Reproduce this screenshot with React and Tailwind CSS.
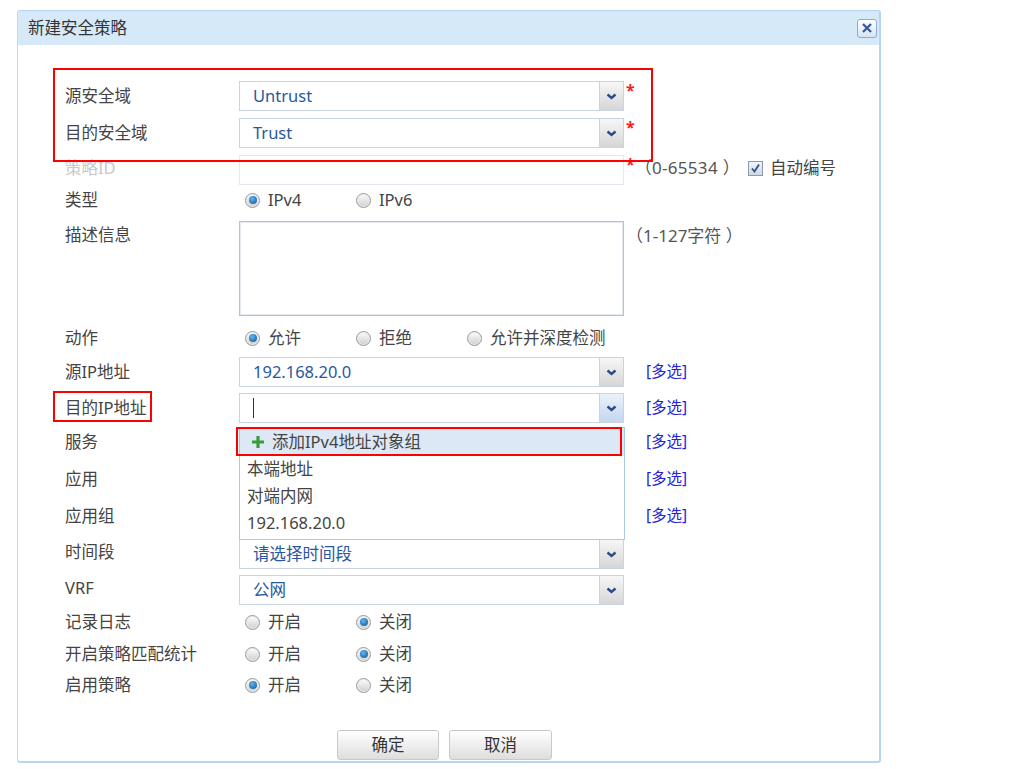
import React from 'react';

const FONT = { fontFamily: '"Noto Sans", "Noto Sans CJK SC", sans-serif' };

function Chevron() {
  return (
    <svg width="11" height="7" viewBox="0 0 11 7">
      <path d="M1.5 1.5 L5.5 5 L9.5 1.5" fill="none" stroke="#2c4a85" strokeWidth="2.4" />
    </svg>
  );
}

function Select({ value, active, children }) {
  return (
    <div className="relative flex h-[30px] w-[385px] border border-[#c9d3e1] bg-white">
      <div className="flex flex-1 items-center pl-[13px] text-[16.5px] text-[#2a58a0]">{value}</div>
      <div
        className={`flex w-[24px] items-center justify-center border-l border-[#c9d3e1] bg-gradient-to-b ${
          active ? 'from-[#eaf2fb] to-[#c3d7ee]' : 'from-[#f7f7f7] to-[#d6d6d6]'
        }`}
      >
        <Chevron />
      </div>
      {children}
    </div>
  );
}

function Radio({ checked, label, width }) {
  return (
    <div className="flex items-center gap-[8px]" style={{ width }}>
      <span className="flex h-[15px] w-[15px] items-center justify-center rounded-full border border-[#9a9a9a] bg-gradient-to-b from-[#fdfdfd] to-[#cfcfcf] shadow-[inset_0_0_0_1px_#ececec]">
        {checked && <span className="h-[8px] w-[8px] rounded-full bg-[radial-gradient(circle_at_40%_35%,#5fb8f0,#0b4f93)]" />}
      </span>
      <span className="text-[16.5px] text-[#444]">{label}</span>
    </div>
  );
}

function Row({ label, labelClass = 'text-[#444]', className = '', children, labelExtra }) {
  return (
    <div className={`flex items-center ${className}`}>
      <div className={`relative w-[174px] text-[16.5px] ${labelClass}`}>
        {label}
        {labelExtra}
      </div>
      {children}
    </div>
  );
}

function Multi() {
  return <span className="ml-[22px] text-[15.5px] text-[#2323d8]">[多选]</span>;
}

function Star() {
  return <span className="ml-[2px] self-start text-[16px] leading-[18px] font-bold text-[#ff1a1a]">*</span>;
}

export default function App() {
  return (
    <div className="min-h-[769px] w-[1015px] bg-white pl-[17px] pt-[10px]" style={FONT}>
      <div className="h-[753px] w-[864px] rounded-[3px] border border-r-2 border-b-2 border-[#b8d5ef] border-l-[#d4d4d4] bg-white">
        {/* header */}
        <div className="flex h-[34px] items-center justify-between bg-[#d6e9f8] pl-[10px] pr-[2px]">
          <span className="text-[16.5px] text-[#333]">新建安全策略</span>
          <div className="flex h-[19px] w-[20px] items-center justify-center rounded-[3px] border border-[#8eaad6] bg-gradient-to-b from-[#ffffff] to-[#d5e4f4]">
            <svg width="12" height="12" viewBox="0 0 12 12">
              <path d="M2 2 L10 10 M10 2 L2 10" stroke="#3d5a99" strokeWidth="2.4" />
            </svg>
          </div>
        </div>

        {/* body */}
        <div className="relative pl-[47px] pt-[36px]">
          <div className="pointer-events-none absolute left-[35px] top-[23px] z-20 h-[94px] w-[600px] border-2 border-[#ff0000]" />

          <Row label="源安全域">
            <Select value="Untrust" />
            <Star />
          </Row>
          <Row label="目的安全域" className="mt-[7px]">
            <Select value="Trust" />
            <Star />
          </Row>
          <Row label="策略ID" labelClass="text-[#c8c8c8] -mt-[4px]" className="mt-[7px]">
            <div className="h-[30px] w-[385px] border border-[#e3e9f1] bg-white" />
            <span className="ml-[2px] self-start text-[16px] leading-[18px] font-bold text-[#ff1a1a]">*</span>
            <span className="-mt-[4px] text-[17px] tracking-[0.3px] text-[#555]">（0-65534 ）</span>
            <span className="-mt-[4px] ml-[8px] flex h-[15px] w-[15px] items-center justify-center border border-[#8a9ab0] bg-gradient-to-b from-[#f4f6f9] to-[#cfd6e0]">
              <svg width="11" height="11" viewBox="0 0 11 11">
                <path d="M2 5.5 L4.5 8.5 L9 1.5" fill="none" stroke="#2d4f8f" strokeWidth="1.8" />
              </svg>
            </span>
            <span className="-mt-[4px] ml-[7px] text-[16.5px] text-[#444]">自动编号</span>
          </Row>
          <Row label="类型" className="mt-[4px] h-[22px]">
            <div className="flex pl-[6px]">
              <Radio checked label="IPv4" width="111px" />
              <Radio label="IPv6" />
            </div>
          </Row>
          <div className="mt-[10px] flex items-start">
            <div className="w-[174px] pt-[2px] text-[16.5px] text-[#444]">描述信息</div>
            <div className="h-[95px] w-[385px] border border-[#b7c1d1] bg-white shadow-[inset_0_0_0_1px_#e4e9f0]" />
            <span className="ml-[2px] pt-[2px] text-[17px] text-[#555]">（1-127字符 ）</span>
          </div>
          <Row label="动作" className="mt-[10px] h-[24px]">
            <div className="flex pl-[6px]">
              <Radio checked label="允许" width="111px" />
              <Radio label="拒绝" width="111px" />
              <Radio label="允许并深度检测" />
            </div>
          </Row>
          <Row label="源IP地址" className="mt-[7px]">
            <Select value="192.168.20.0" />
            <Multi />
          </Row>
          <Row
            label="目的IP地址"
            className="mt-[6px]"
            labelExtra={
              <span className="pointer-events-none absolute left-[-12px] top-[-5px] h-[31px] w-[99px] border-2 border-[#ff0000]" />
            }
          >
            <Select
              value={<span className="h-[20px] w-[1px] bg-[#333]" />}
              active
            >
              <div className="absolute left-[-1px] top-[33px] z-10 h-[113px] w-[386px] border border-[#a9c8ea] bg-white">
                <div className="relative flex h-[28px] items-center bg-[#dde8f6] pl-[10px] text-[16.5px] text-[#444]">
                  <svg width="16" height="16" viewBox="0 0 16 16" className="mr-[6px]">
                    <path d="M8 2 V14 M2 8 H14" stroke="#3c9b3a" strokeWidth="3.2" />
                  </svg>
                  添加IPv4地址对象组
                  <span className="pointer-events-none absolute left-[-4px] top-[-1px] h-[29px] w-[386px] border-2 border-[#ff0000]" />
                </div>
                <div className="flex h-[27px] items-center pl-[7px] text-[16.5px] text-[#444]">本端地址</div>
                <div className="flex h-[27px] items-center pl-[7px] text-[16.5px] text-[#444]">对端内网</div>
                <div className="flex h-[27px] items-center pl-[7px] text-[16.5px] text-[#444]">192.168.20.0</div>
              </div>
            </Select>
            <Multi />
          </Row>
          <Row label="服务" className="mt-[4px] h-[30px]">
            <div className="w-[385px]" />
            <Multi />
          </Row>
          <Row label="应用" className="mt-[7px] h-[30px]">
            <div className="w-[385px]" />
            <Multi />
          </Row>
          <Row label="应用组" className="mt-[7px] h-[30px]">
            <div className="w-[385px]" />
            <Multi />
          </Row>
          <Row label="时间段" labelClass="text-[#444] -mt-[4px]" className="mt-[8px]">
            <Select value="请选择时间段" />
          </Row>
          <Row label="VRF" labelClass="text-[#444] -mt-[4px]" className="mt-[6px]">
            <Select value="公网" />
          </Row>
          <Row label="记录日志" className="mt-[6px] h-[22px]">
            <div className="flex pl-[6px]">
              <Radio label="开启" width="111px" />
              <Radio checked label="关闭" />
            </div>
          </Row>
          <Row label="开启策略匹配统计" className="mt-[10px] h-[22px]">
            <div className="flex pl-[6px]">
              <Radio label="开启" width="111px" />
              <Radio checked label="关闭" />
            </div>
          </Row>
          <Row label="启用策略" className="mt-[9px] h-[22px]">
            <div className="flex pl-[6px]">
              <Radio checked label="开启" width="111px" />
              <Radio label="关闭" />
            </div>
          </Row>

          <div className="mt-[34px] flex gap-[10px] pl-[272px]">
            <button className="h-[30px] w-[102px] rounded-[3px] border border-[#c9c9c9] bg-gradient-to-b from-[#ffffff] to-[#dedede] text-[16.5px] text-[#333]">
              确定
            </button>
            <button className="h-[30px] w-[103px] rounded-[3px] border border-[#c9c9c9] bg-gradient-to-b from-[#ffffff] to-[#dedede] text-[16.5px] text-[#333]">
              取消
            </button>
          </div>
        </div>
      </div>
    </div>
  );
}
